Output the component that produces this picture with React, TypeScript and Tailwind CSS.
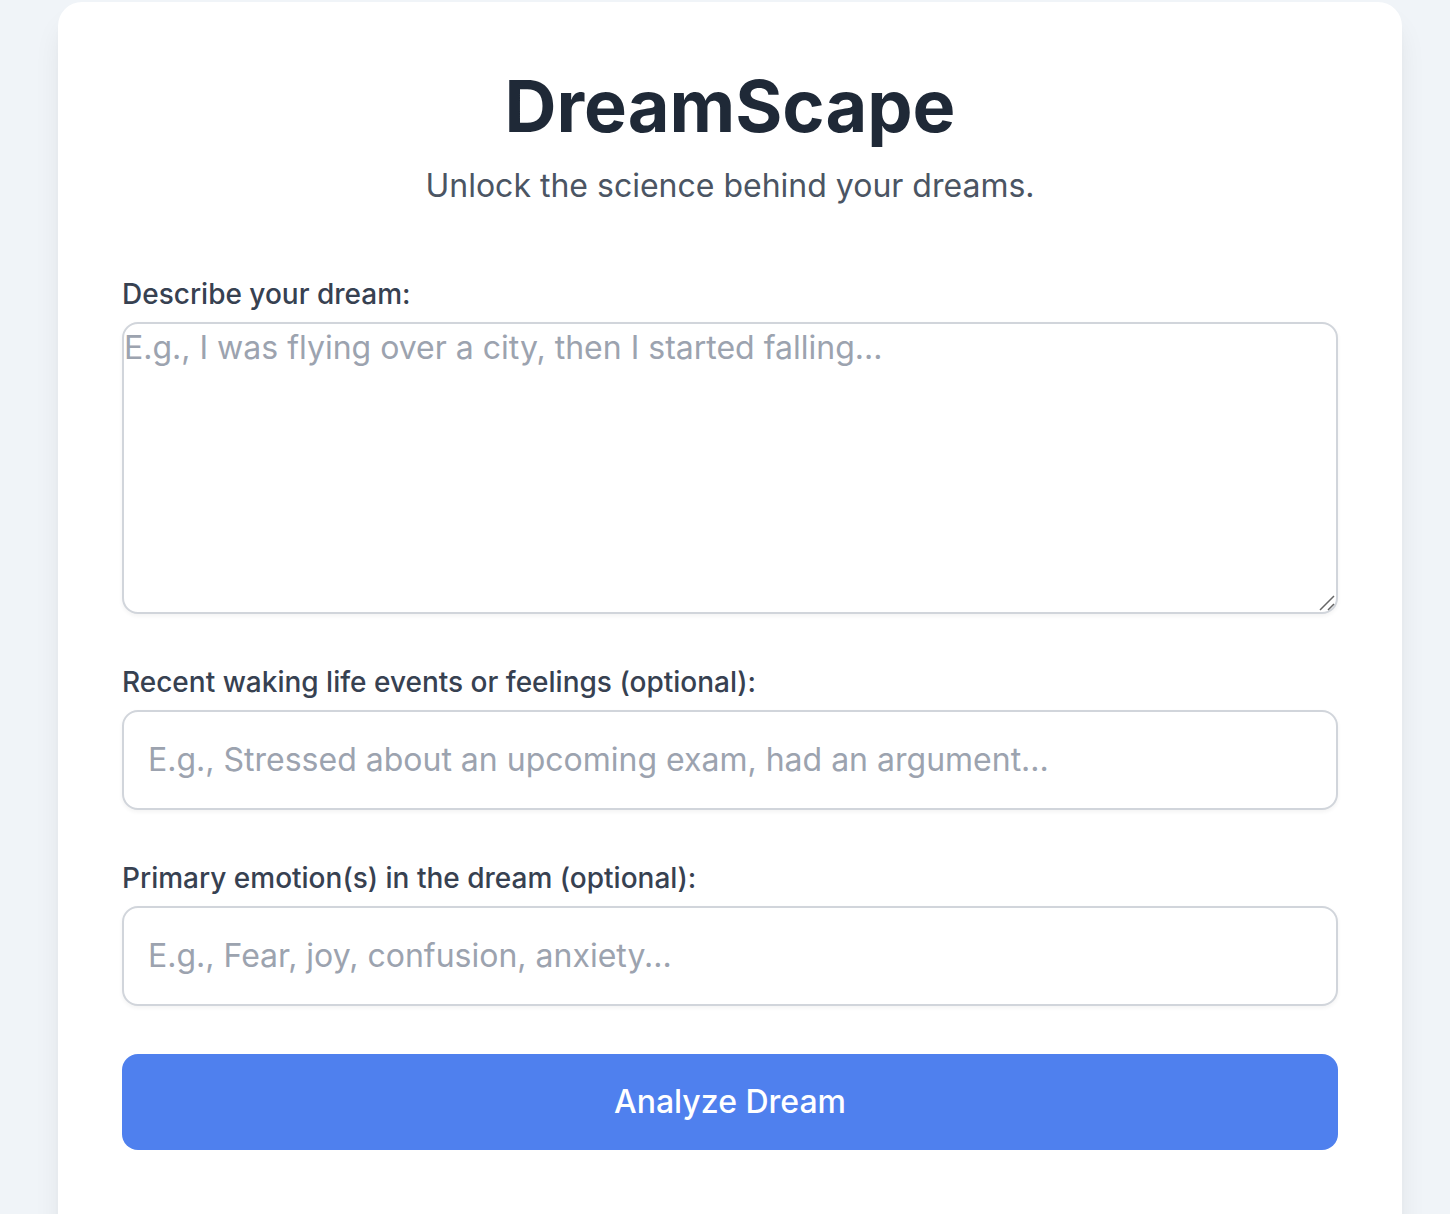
import React from "react";

const labelClass = "block text-[28px] leading-10 font-medium text-[#374151]";
const fieldClass =
  "block w-full rounded-2xl border-2 border-[#d1d5db] bg-white text-[32px] leading-12 text-[#1f2937] shadow-[0_2px_4px_0_rgba(0,0,0,0.05)] placeholder:text-[#9ca3af] placeholder:opacity-100 focus:outline-[#4f80ee]";

export default function App() {
  return (
    <div className="min-h-screen bg-[#f0f4f8] pt-0.5 pr-12 pl-[58px] font-['Inter',sans-serif]">
      <main className="-mb-10 min-h-[calc(100vh_+_40px)] rounded-3xl bg-white p-16 shadow-[0_20px_30px_-6px_rgba(0,0,0,0.1),0_8px_12px_-8px_rgba(0,0,0,0.1)]">
        <header className="mb-16 text-center">
          <h1 className="text-[72px] leading-20 font-bold text-[#1f2937]">DreamScape</h1>
          <p className="mt-4 text-[32px] leading-12 text-[#4b5563]">Unlock the science behind your dreams.</p>
        </header>
        <form className="flex flex-col gap-12" onSubmit={(e) => e.preventDefault()}>
          <div>
            <label htmlFor="dream" className={labelClass}>Describe your dream:</label>
            <div className="relative mt-2">
              <textarea
                id="dream"
                rows={6}
                className={`${fieldClass} resize-y [&::-webkit-resizer]:bg-transparent`}
                placeholder="E.g., I was flying over a city, then I started falling..."
              />
              <svg
                className="pointer-events-none absolute right-0.5 bottom-0.5 size-5"
                viewBox="0 0 20 20"
                fill="none"
                stroke="#666666"
                strokeWidth="1.5"
                aria-hidden="true"
              >
                <path d="M4 18 18 4M12 18l6-6" />
              </svg>
            </div>
          </div>
          <div>
            <label htmlFor="events" className={labelClass}>Recent waking life events or feelings (optional):</label>
            <input
              id="events"
              type="text"
              className={`${fieldClass} mt-2 p-6`}
              placeholder="E.g., Stressed about an upcoming exam, had an argument..."
            />
          </div>
          <div>
            <label htmlFor="emotions" className={labelClass}>Primary emotion(s) in the dream (optional):</label>
            <input
              id="emotions"
              type="text"
              className={`${fieldClass} mt-2 p-6`}
              placeholder="E.g., Fear, joy, confusion, anxiety..."
            />
          </div>
          <button type="submit" className="w-full rounded-2xl bg-[#4f80ee] py-6 text-[32px] leading-12 font-medium text-white">
            Analyze Dream
          </button>
        </form>
      </main>
    </div>
  );
}
